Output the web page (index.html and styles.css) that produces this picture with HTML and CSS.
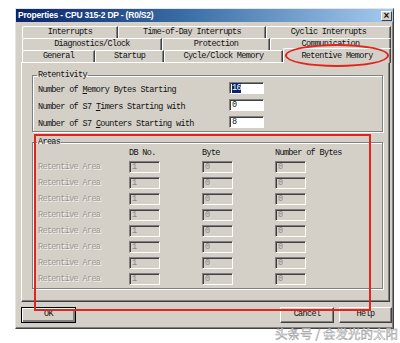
FILE: index.html
```
<!DOCTYPE html>
<html lang="en">
<head>
	<meta charset="UTF-8">
	<title>Properties - CPU 315-2 DP - (R0/S2)</title>
	<link rel="stylesheet" href="styles.css">
</head>
<body>

	<div class="dialog">
		<div class="titlebar">
			<span class="title">Properties - CPU 315-2 DP - (R0/S2)</span>
			<span class="close">&#215;</span>
		</div>

		<!-- tabs -->
		<div class="tabs">
			<div class="tab-row row-1">
				<span class="tab">Interrupts</span>
				<span class="tab">Time-of-Day Interrupts</span>
				<span class="tab">Cyclic Interrupts</span>
			</div>
			<div class="tab-row row-2">
				<span class="tab">Diagnostics/Clock</span>
				<span class="tab">Protection</span>
				<span class="tab">Communication</span>
			</div>
			<div class="tab-row row-3">
				<span class="tab">General</span>
				<span class="tab">Startup</span>
				<span class="tab">Cycle/Clock Memory</span>
				<span class="tab active">Retentive Memory</span>
			</div>
		</div>
		<!-- tabs -->

		<div class="panel">
			<fieldset class="group retentivity">
				<legend>Retentivity</legend>
				<div class="ret-row">
					<div class="ret-label">Number of <u>M</u>emory Bytes Starting</div>
					<span class="field"><span class="sel">16</span></span>
				</div>
				<div class="ret-row">
					<div class="ret-label">Number of S7 <u>T</u>imers Starting with</div>
					<span class="field">0</span>
				</div>
				<div class="ret-row">
					<div class="ret-label">Number of S7 <u>C</u>ounters Starting with</div>
					<span class="field">8</span>
				</div>
			</fieldset>

			<fieldset class="group areas">
				<legend>Areas</legend>
				<div class="area-grid">
					<span></span><span class="head">DB No.</span><span class="head">Byte</span><span class="head">Number of Bytes</span>
				</div>
				<div class="area-list" id="area_list"></div>
			</fieldset>
		</div>

		<div class="buttons">
			<span class="btn default">OK</span>
			<span class="btn push">Cancel</span>
			<span class="btn">Help</span>
		</div>
	</div>

	<div class="watermark">头条号 / 会发光的太阳</div>

	<!-- annotations -->
	<div class="mark-box"></div>
	<div class="mark-ring"></div>

	<script type="text/javascript">
		var list=document.getElementById('area_list');
		for (var i = 0; i < 8; i++) {
			var row=document.createElement('div');
			row.className='area-grid area-row';
			row.innerHTML='<span class="off">Retentive Area</span>'+
				'<span class="field dis">1</span>'+
				'<span class="field dis">0</span>'+
				'<span class="field dis">0</span>';
			list.appendChild(row);
		}
	</script>
</body>
</html>
```
FILE: styles.css
```
*{margin: 0;padding: 0;box-sizing: border-box;}
body{background: #fff;font: 8.5px/10px "Liberation Mono", monospace;letter-spacing: -0.65px;color: #111;}

.dialog{width: 379px;margin: 8px 0 0 15px;background: #d4d0c8;border: 1px solid;border-color: #e8e6e2 #404040 #404040 #e8e6e2;box-shadow: inset -1px -1px 0 #808080;padding-bottom: 5px;}

.titlebar{height: 13px;display: flex;align-items: center;justify-content: space-between;padding: 0 1px 0 2px;background: linear-gradient(to right, #0a246a, #3a6ea5 45%, #a6caf0);}
.title{font: bold 8.5px/13px "Liberation Sans", sans-serif;letter-spacing: -0.2px;color: #fff;}
.close{width: 11px;height: 10px;background: #d4d0c8;border: 1px solid;border-color: #fff #404040 #404040 #fff;font: bold 10px/8px "Liberation Sans", sans-serif;text-align: center;letter-spacing: 0;}

.tabs{margin: 4px 0 0 6px;width: 369px;}
.tab-row{display: grid;height: 12px;}
.row-1{grid-template-columns: 96px 148px 125px;}
.row-2{grid-template-columns: 140px 108px 121px;}
.row-3{grid-template-columns: 73px 69px 119px 108px;}
.tab{display: block;text-align: center;line-height: 11px;border-top: 1px solid #fff;border-left: 1px solid #fff;border-right: 1px solid #404040;box-shadow: inset -1px 0 0 #808080;border-top-left-radius: 2px;white-space: nowrap;}
.tab.active{margin: -2px 0 -1px 0;position: relative;z-index: 2;background: #d4d0c8;line-height: 14px;}

.panel{width: 369px;height: 240px;margin-left: 5px;border: 1px solid;border-color: #fff #404040 #404040 #fff;box-shadow: inset -1px -1px 0 #808080;padding: 0 6px 0 10px;}

.group{border: 1px solid #808080;box-shadow: 1px 1px 0 #fff, inset 1px 1px 0 #fff;padding: 2px 5px 3px 5px;}
.group legend{padding: 0 1px;line-height: 10px;margin-left: -1px;}
.retentivity{margin-top: 7px;}
.areas{margin-top: 5px;padding-top: 1px;}

.ret-row{display: flex;height: 12px;margin-bottom: 5px;}
.ret-row:last-child{margin-bottom: 0;}
.ret-label{width: 191px;margin-top: 3px;white-space: nowrap;}

.field{display: block;width: 35px;height: 12px;background: #fff;border: 1px solid;border-color: #808080 #fff #fff #808080;box-shadow: inset 1px 1px 0 #404040;padding-left: 2px;line-height: 10px;}
.sel{background: #0a246a;color: #fff;}

.area-grid{display: grid;grid-template-columns: 91px 73px 73px 80px;white-space: nowrap;}
.head{line-height: 10px;}
.area-list{margin-top: 3px;}
.area-row{height: 12px;margin-bottom: 4px;}
.area-row:last-child{margin-bottom: 0;}
.off{color: #9a9892;text-shadow: 1px 1px 0 #f4f2ee;line-height: 12px;}
.field.dis{width: 31px;background: #d4d0c8;color: #8a8882;}

.buttons{display: flex;margin: 5px 0 0 5px;width: 371px;height: 16px;}
.btn{width: 53px;height: 16px;text-align: center;line-height: 13px;border: 1px solid;border-color: #fff #404040 #404040 #fff;box-shadow: inset -1px -1px 0 #808080;}
.btn.default{width: 55px;border: 1px solid #000;box-shadow: inset 1px 1px 0 #fff, inset -2px -2px 0 #808080;}
.btn.push{margin: 0 5px 0 auto;width: 54px;}

.watermark{width: 398px;margin-top: -2px;text-align: right;font: 12.5px/14px "Noto Sans CJK SC", sans-serif;letter-spacing: 0;color: #fff;-webkit-text-stroke: 0.5px #9a9a9a;}

.mark-box{position: absolute;z-index: 5;left: 34px;top: 134px;width: 337px;height: 177px;border: 2px solid #e3241c;}
.mark-ring{position: absolute;z-index: 5;left: 285px;top: 44px;width: 104px;height: 23px;border: 2px solid #e3241c;border-radius: 50%;}
```
